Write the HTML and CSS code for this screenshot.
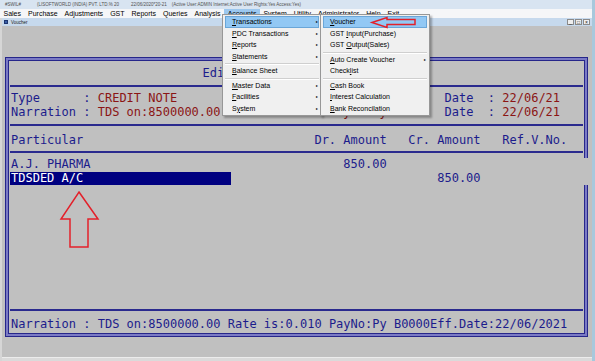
FILE: index.html
```html
<!DOCTYPE html>
<html lang="en">
<head>
    <meta charset="UTF-8">
    <meta name="viewport" content="width=device-width, initial-scale=1.0">
    <title>Voucher</title>
    <link rel="stylesheet" href="styles.css">
</head>
<body>
    <div class="app">
        <div class="caption">
            <span>#SWIL#</span>
            <span class="cap-firm">(LISOFTWORLD (INDIA) PVT. LTD.% 20</span>
            <span class="cap-date">22/06/2020*20-21</span>
            <span class="cap-user">(Active User:ADMIN Internet:Active User Rights:Yes Access:Yes)</span>
        </div>

        <div class="menubar">
            <span>Sales</span>
            <span>Purchase</span>
            <span>Adjustments</span>
            <span>GST</span>
            <span>Reports</span>
            <span>Queries</span>
            <span>Analysis</span>
            <span class="open">Accounts</span>
            <span>System</span>
            <span>Utility</span>
            <span>Administrator</span>
            <span>Help</span>
            <span>Exit</span>
        </div>

        <div class="child">
            <div class="child-title">
                <span class="child-icon"></span>
                <span>Voucher</span>
                <div class="controls">
                    <span>_</span>
                    <span>&#9633;</span>
                    <span>&times;</span>
                </div>
            </div>

            <div class="client">
                <div class="frame">
                    <div class="frame-inner">
                        <div class="heading">Edit Voucher - Credit Note</div>
                        <div class="rule"></div>

                        <div class="info">
                            <div class="info-row">
                                <span>Type      : <span class="val">CREDIT NOTE</span></span>
                                <span>Date  : <span class="val">22/06/21</span></span>
                            </div>
                            <div class="info-row">
                                <span>Narration : <span class="val">TDS on:8500000.00 Rate is:0.010 PayNo:Py B</span></span>
                                <span>Date  : <span class="val">22/06/21</span></span>
                            </div>
                        </div>
                        <div class="rule"></div>

                        <div class="head grid-row">
                            <span>Particular</span>
                            <span class="amt">Dr. Amount</span>
                            <span class="amt">Cr. Amount</span>
                            <span>Ref.V.No.</span>
                        </div>
                        <div class="rule"></div>

                        <div class="lines">
                            <div class="grid-row">
                                <span>A.J. PHARMA</span>
                                <span class="amt">850.00</span>
                                <span class="amt"></span>
                                <span></span>
                            </div>
                            <div class="grid-row">
                                <span><span class="sel">TDSDED A/C</span></span>
                                <span class="amt"></span>
                                <span class="amt">850.00</span>
                                <span></span>
                            </div>
                        </div>
                        <div class="rule"></div>

                        <div class="footer">Narration : TDS on:8500000.00 Rate is:0.010 PayNo:Py B0000Eff.Date:22/06/2021</div>
                    </div>
                    <span class="scroll-gap"></span>
                </div>
            </div>
            <div class="status"></div>
        </div>

        <!-- Accounts dropdown -->
        <div class="menu menu-accounts">
            <div class="item sub hot"><u>T</u>ransactions</div>
            <div class="item sub"><u>P</u>DC Transactions</div>
            <div class="item sub"><u>R</u>eports</div>
            <div class="item sub"><u>S</u>tatements</div>
            <div class="sep"></div>
            <div class="item"><u>B</u>alance Sheet</div>
            <div class="sep"></div>
            <div class="item sub"><u>M</u>aster Data</div>
            <div class="item sub"><u>F</u>acilities</div>
            <div class="item sub">S<u>y</u>stem</div>
        </div>

        <!-- Transactions submenu -->
        <div class="menu menu-transactions">
            <div class="item hot"><u>V</u>oucher</div>
            <div class="item">GST <u>I</u>nput(Purchase)</div>
            <div class="item">GST <u>O</u>utput(Sales)</div>
            <div class="sep"></div>
            <div class="item sub"><u>A</u>uto Create Voucher</div>
            <div class="item">Check<u>l</u>ist</div>
            <div class="sep"></div>
            <div class="item"><u>C</u>ash Book</div>
            <div class="item"><u>I</u>nterest Calculation</div>
            <div class="item"><u>B</u>ank Reconcilation</div>
        </div>

        <svg class="arrow-left" width="54" height="20" viewBox="0 0 54 20">
            <path d="M6 10.5 L21 5.5 L21 7.5 L49 7.5 L49 12.5 L21 12.5 L21 15.5 Z" fill="none" stroke="#e3202a" stroke-width="1.5" stroke-linejoin="miter"/>
        </svg>

        <svg class="arrow-up" width="48" height="66" viewBox="0 0 48 66">
            <path d="M23 6 L42 33 L32 33 L32 61 L14 61 L14 33 L5 33 Z" fill="none" stroke="#e3202a" stroke-width="1.5"/>
        </svg>
    </div>
</body>
</html>
```

FILE: styles.css
```css
* {
    box-sizing: border-box;
}

body {
    margin: 0;
    width: 595px;
    height: 361px;
    overflow: hidden;
    background-color: #a8c8dc;
    font-family: "Liberation Sans", Arial, sans-serif;
}

.app {
    position: relative;
    width: 592px;
    height: 361px;
    background-color: #c0c0c0;
}

/* top caption of the main window */
.caption {
    display: flex;
    height: 9px;
    padding-left: 5px;
    background-color: #d8e4f1;
    color: #505050;
    font-size: 4.5px;
    line-height: 9px;
    white-space: nowrap;
}

.cap-firm {
    margin-left: 16px;
}

.cap-date {
    margin-left: 12px;
}

.cap-user {
    margin-left: 5px;
}

.menubar {
    display: flex;
    height: 9px;
    background-color: #f5f6f8;
    font-size: 7px;
    line-height: 9px;
    color: #000;
}

.menubar span {
    padding: 0 3.5px;
}

.menubar .open {
    background-color: #9cc8ef;
}

/* mdi child window */
.child {
    border-left: 2px solid #d6d6d6;
}

.child-title {
    display: flex;
    align-items: center;
    height: 8px;
    padding-left: 2px;
    background-color: #c6d9ed;
    font-size: 4.5px;
    color: #222;
}

.child-icon {
    width: 4px;
    height: 4px;
    margin-right: 3px;
    background-color: #3a5fa8;
    border: 1px solid #1d3570;
}

.controls {
    display: flex;
    gap: 1px;
    margin-left: auto;
    margin-right: 2px;
}

.controls span {
    width: 7px;
    height: 6px;
    border: 1px solid #8a8a8a;
    background-color: #eeeeee;
    font-size: 5px;
    line-height: 4px;
    text-align: center;
}

.client {
    height: 331px;
    padding: 31px 0 0 3px;
}

.status {
    height: 4px;
    border-top: 1px solid #ececec;
    background-color: #dadada;
}

/* blue voucher frame */
.frame {
    position: relative;
    width: 583px;
    height: 280px;
    padding: 2px;
    border: 1px solid #26268a;
    background-color: #7a7ac4;
}

.frame-inner {
    display: flex;
    flex-direction: column;
    height: 100%;
    border: 1px solid #26268a;
    background-color: #c0c0c0;
    font-family: "DejaVu Sans Mono", "Liberation Mono", monospace;
    font-size: 12px;
    color: #1c1c8c;
}

.scroll-gap {
    position: absolute;
    top: 100px;
    right: -1px;
    width: 5px;
    height: 27px;
    background-color: #c0c0c0;
}

.heading {
    height: 24px;
    line-height: 24px;
    text-align: center;
}

.rule {
    height: 2px;
    margin: 0 1px;
    background-color: #2a2a8e;
}

.info {
    padding: 4px 0 5px 2px;
}

.info-row {
    display: grid;
    grid-template-columns: 60ch auto;
    height: 14px;
    line-height: 14px;
    overflow: hidden;
    white-space: pre;
}

.val {
    color: #8b1515;
}

.grid-row {
    display: grid;
    grid-template-columns: 42ch 13ch 13ch auto;
    height: 14px;
    line-height: 14px;
    white-space: pre;
}

.amt {
    padding-right: 3ch;
    text-align: right;
}

.head {
    margin: 7px 0 4px;
    padding-left: 2px;
}

.lines {
    flex: 1;
    padding: 4px 0 0 2px;
}

.sel {
    display: inline-block;
    width: 221px;
    height: 13px;
    margin-top: 1px;
    margin-left: -1px;
    padding-left: 1px;
    line-height: 12px;
    vertical-align: top;
    background-color: #000080;
    color: #fff;
}

.footer {
    height: 22px;
    padding: 6px 0 2px 2px;
    line-height: 14px;
    white-space: pre;
}

/* dropdown menus */
.menu {
    position: absolute;
    top: 14px;
    padding: 1px 2px;
    border: 1px solid #979797;
    background-color: #f0f0f0;
    box-shadow: 2px 2px 2px rgba(0, 0, 0, 0.3);
    font-size: 7px;
    color: #000;
}

.menu-accounts {
    left: 222px;
    width: 100px;
}

.menu-transactions {
    left: 320px;
    width: 110px;
}

.menu .item {
    position: relative;
    height: 11.5px;
    padding-left: 7px;
    line-height: 11.5px;
}

.menu .hot {
    background-color: #92c8f4;
    box-shadow: inset 0 0 0 1px #6aa6d8;
}

.menu .sub::after {
    content: "\25B8";
    position: absolute;
    right: 1px;
    font-size: 4px;
}

.menu .sep {
    height: 2px;
    margin-top: 1px;
    border-top: 1px solid #cfcfcf;
    border-bottom: 1px solid #fff;
}

.arrow-left {
    position: absolute;
    left: 366px;
    top: 12px;
}

.arrow-up {
    position: absolute;
    left: 56px;
    top: 186px;
}
```
